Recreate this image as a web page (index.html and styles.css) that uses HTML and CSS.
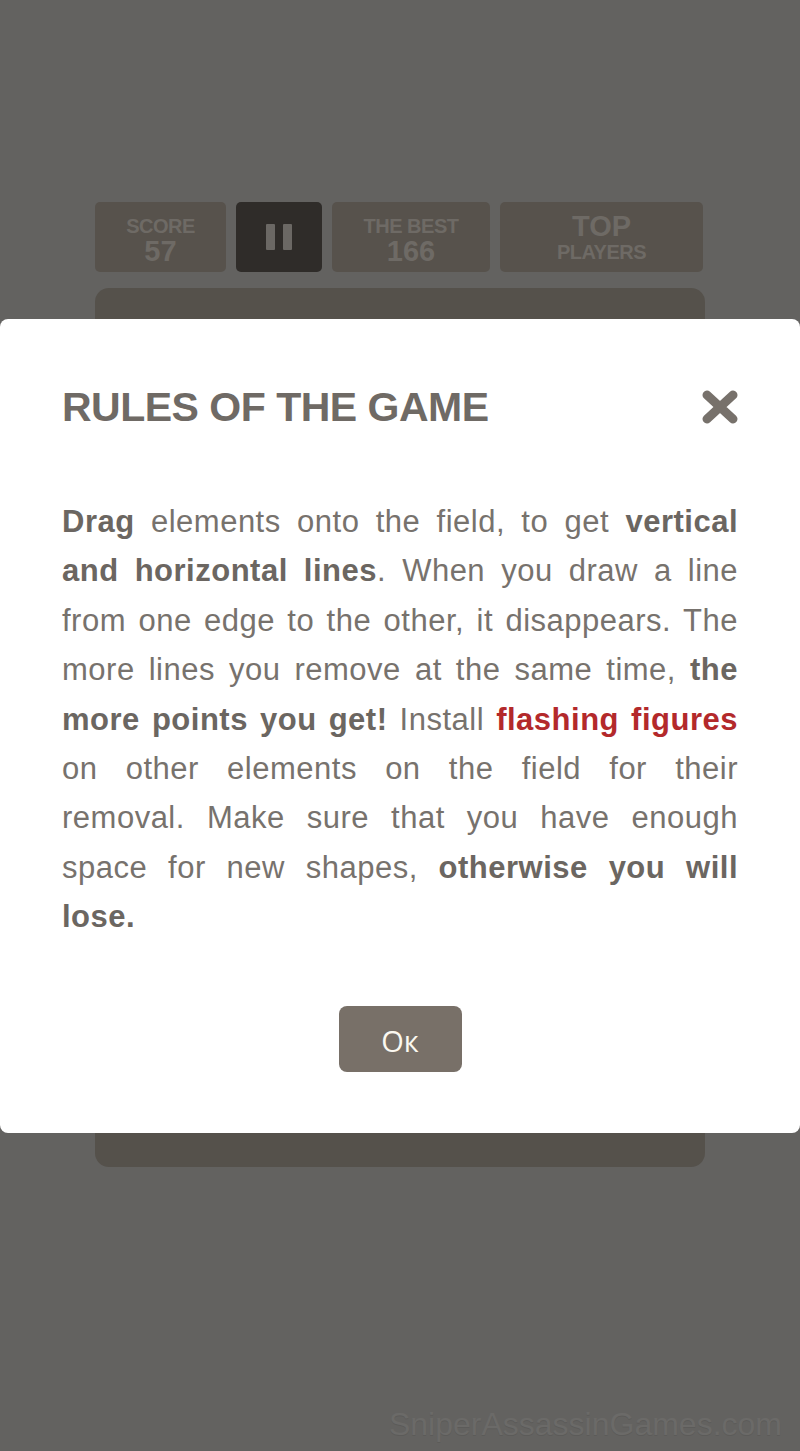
FILE: index.html
```html
<!DOCTYPE html>
<html lang="en">

<head>
    <meta charset="UTF-8" />
    <meta name="viewport" content="width=device-width, initial-scale=1.0" />
    <title>Rules of the game</title>
    <link rel="stylesheet" href="styles.css">
</head>

<body>
    <div class="game">
        <div class="scoreboard">
            <div class="stat score">
                <span class="stat-label">SCORE</span>
                <span class="stat-value">57</span>
            </div>
            <div class="stat pause">
                <span class="pause-bar"></span>
                <span class="pause-bar"></span>
            </div>
            <div class="stat best">
                <span class="stat-label">THE BEST</span>
                <span class="stat-value">166</span>
            </div>
            <div class="stat top">
                <span class="top-big">TOP</span>
                <span class="stat-label">PLAYERS</span>
            </div>
        </div>
        <div class="board"></div>
    </div>

    <div class="modal">
        <div class="modal-head">
            <h1 class="modal-title">RULES OF THE GAME</h1>
            <button class="modal-close" aria-label="Close">
                <svg width="38" height="34" viewBox="0 0 38 34">
                    <path d="M6 5 L32 29 M32 5 L6 29" stroke="#77716b" stroke-width="9" stroke-linecap="round" />
                </svg>
            </button>
        </div>
        <p class="rules">
            <span class="line"><b>Drag</b> elements onto the field, to get <b>vertical</b></span>
            <span class="line"><b>and horizontal lines</b>. When you draw a line</span>
            <span class="line">from one edge to the other, it disappears. The</span>
            <span class="line">more lines you remove at the same time, <b>the</b></span>
            <span class="line"><b>more points you get!</b> Install <b class="hot">flashing figures</b></span>
            <span class="line">on other elements on the field for their</span>
            <span class="line">removal. Make sure that you have enough</span>
            <span class="line">space for new shapes, <b>otherwise you will</b></span>
            <span class="line last"><b>lose.</b></span>
        </p>
        <div class="modal-foot">
            <button class="ok-btn">Ок</button>
        </div>
    </div>

    <div class="watermark">SniperAssassinGames.com</div>
</body>

</html>
```

FILE: styles.css
```css
body {
    margin: 0;
    height: 1451px;
    background-color: #636260;
    font-family: 'Liberation Sans', Arial, sans-serif;
    position: relative;
    overflow: hidden;
}

.game {
    width: 610px;
    margin: 0 auto;
    padding-top: 202px;
}

.scoreboard {
    display: flex;
    gap: 10px;
}

.stat {
    height: 70px;
    box-sizing: border-box;
    background-color: #57524c;
    border-radius: 5px;
    display: flex;
    flex-direction: column;
    align-items: center;
    justify-content: center;
    color: #6e6a65;
    font-weight: bold;
}

.score {
    width: 131px;
    padding-top: 6px;
}

.pause {
    width: 86px;
    background-color: #2f2c29;
    flex-direction: row;
    gap: 8px;
}

.pause-bar {
    width: 9px;
    height: 26px;
    background-color: #6b6864;
    border-radius: 1px;
}

.best {
    width: 158px;
    padding-top: 6px;
}

.top {
    width: 203px;
}

.stat-label {
    font-size: 20px;
    line-height: 22px;
    letter-spacing: -0.5px;
}

.stat-value {
    font-size: 29px;
    line-height: 28px;
}

.top-big {
    font-size: 29px;
    line-height: 30px;
}

.board {
    margin-top: 16px;
    height: 879px;
    background-color: #55514b;
    border-radius: 14px;
}

/* rules dialog lies over the game field */
.modal {
    position: absolute;
    top: 319px;
    left: 0;
    right: 0;
    height: 814px;
    box-sizing: border-box;
    background-color: #fff;
    border-radius: 8px;
    padding: 0 62px;
    color: #77726d;
}

.modal-head {
    display: flex;
    justify-content: space-between;
    align-items: center;
    padding-top: 64px;
}

.modal-title {
    margin: 0;
    font-size: 41px;
    line-height: 48px;
    letter-spacing: -0.5px;
    color: #6f6a65;
}

.modal-close {
    border: none;
    background: none;
    padding: 0;
    margin-right: -1px;
    display: flex;
}

.rules {
    margin: 66px 0 0;
    font-size: 31px;
    line-height: 49.4px;
    letter-spacing: 0.5px;
    text-align: justify;
}

/* every line is stretched edge to edge, like the original copy */
.rules .line {
    display: block;
    white-space: nowrap;
    text-align-last: justify;
}

.rules .line.last {
    text-align-last: left;
}

.rules b {
    color: #6b6661;
}

.rules .hot {
    color: #b3292b;
}

.modal-foot {
    display: flex;
    justify-content: center;
    margin-top: 64px;
}

.ok-btn {
    width: 123px;
    height: 66px;
    border: none;
    border-radius: 8px;
    background-color: #787068;
    color: #fbf8f0;
    font-family: 'Open Sans', sans-serif;
    font-size: 29px;
    padding-top: 4px;
}

.watermark {
    position: absolute;
    right: 18px;
    bottom: 8px;
    font-size: 32px;
    color: #6b6a68;
    text-shadow: 0 1px 0 #5c5b59;
}
```
